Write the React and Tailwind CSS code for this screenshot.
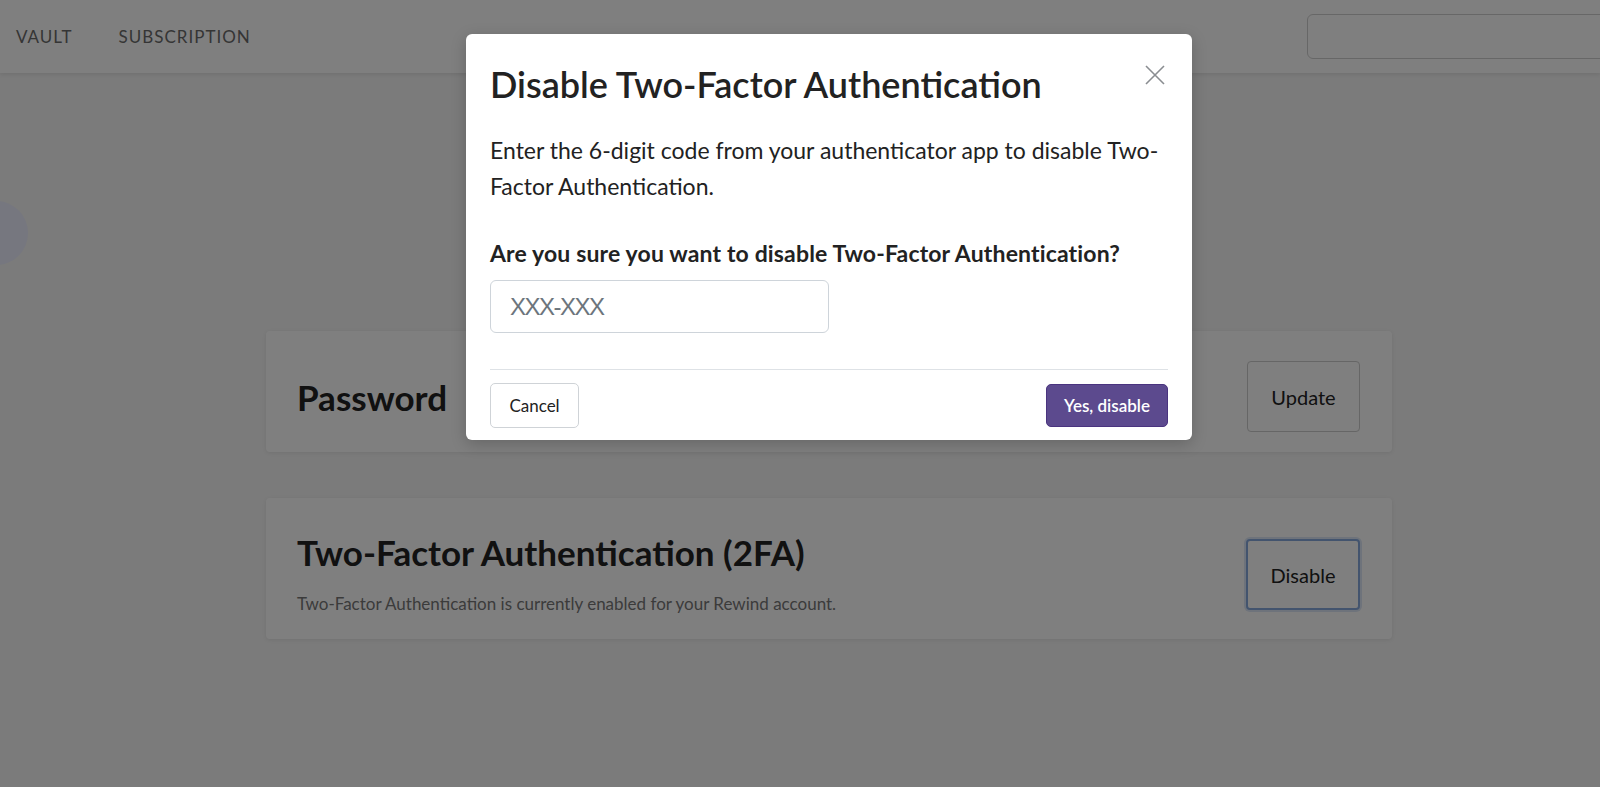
import React from "react";

function CloseIcon() {
  return (
    <svg width="20" height="20" viewBox="0 0 20 20" fill="none" stroke="#8a8d91" strokeWidth="1.6">
      <path d="M1 1 L19 19 M19 1 L1 19" />
    </svg>
  );
}

export default function App() {
  return (
    <div className="relative w-full h-[787px] overflow-hidden bg-[#f6f6f6]" style={{ fontFamily: "Lato, 'Noto Sans', sans-serif" }}>
      {/* Header */}
      <header className="h-[73px] bg-white shadow-[0_2px_4px_rgba(0,0,0,0.08)] flex items-center">
        <nav className="flex items-center gap-[46px] pl-[16px] text-[17px] tracking-[1px] text-[#6b6b6b]">
          <span>VAULT</span>
          <span>SUBSCRIPTION</span>
        </nav>
        <div className="ml-auto mr-[-30px] w-[323px] h-[45px] rounded-[6px] border border-[#cfcfcf] bg-white" />
      </header>

      {/* Avatar partial circle */}
      <div className="absolute left-[-36px] top-[201px] w-[64px] h-[64px] rounded-full bg-[#eceeff]" />

      {/* Content */}
      <main className="ml-[266px] w-[1126px] pt-[258px] flex flex-col gap-[46px]">
        <section className="h-[121px] bg-white rounded-[4px] shadow-[0_1px_4px_rgba(0,0,0,0.08)] flex items-center justify-between pl-[31px] pr-[32px] pt-[10px]">
          <h2 className="text-[35px] font-bold text-[#222] leading-[42px]">Password</h2>
          <button className="w-[113px] h-[71px] rounded-[4px] border border-[#cccccc] bg-white text-[20px] text-[#222]">Update</button>
        </section>
        <section className="h-[141px] bg-white rounded-[4px] shadow-[0_1px_4px_rgba(0,0,0,0.08)] flex items-center justify-between pl-[31px] pr-[32px]">
          <div className="flex flex-col pt-[10px]">
            <h2 className="text-[35px] font-bold text-[#222] leading-[42px]">Two-Factor Authentication (2FA)</h2>
            <p className="mt-[19px] text-[17px] leading-[24px] text-[#777]">Two-Factor Authentication is currently enabled for your Rewind account.</p>
          </div>
          <button className="mt-[12px] w-[114px] h-[71px] rounded-[4px] border-2 border-[#86a9dd] shadow-[0_0_0_2px_rgba(120,160,220,0.25)] bg-white text-[20px] text-[#222]">Disable</button>
        </section>
      </main>

      {/* Overlay */}
      <div className="absolute inset-0 bg-black/50" />

      {/* Modal */}
      <div className="absolute left-[466px] top-[34px] w-[726px] bg-white rounded-[6px] shadow-[0_4px_16px_rgba(0,0,0,0.2)] px-[24px] pb-[12px]">
        <div className="flex items-start justify-between pt-[28px]">
          <h1 className="text-[36px] font-semibold leading-[44px] text-[#222]">Disable Two-Factor Authentication</h1>
          <button className="mt-[3px] mr-[3px]"><CloseIcon /></button>
        </div>
        <p className="mt-[26px] text-[23px] leading-[36px] text-[#222]">
          Enter the 6-digit code from your authenticator app to disable Two-Factor Authentication.
        </p>
        <p className="mt-[31px] text-[23px] font-bold leading-[36px] text-[#222] tracking-[0.15px]">Are you sure you want to disable Two-Factor Authentication?</p>
        <input
          className="mt-[9px] w-[339px] h-[53px] rounded-[6px] border border-[#ced4da] px-[19px] text-[24px] tracking-[-1.5px] outline-none placeholder:text-[#6c757d]"
          style={{ fontFamily: "'Liberation Sans', Arial, sans-serif" }}
          placeholder="XXX-XXX"
        />
        <div className="mt-[36px] border-t border-[#dee2e6]" />
        <div className="mt-[13px] flex items-center justify-between">
          <button className="w-[89px] h-[45px] rounded-[5px] border border-[#cfd3d7] bg-white text-[17px] text-[#222]">Cancel</button>
          <button className="w-[122px] h-[43px] rounded-[5px] border border-[#4a347f] bg-[#5c4a8e] text-[17px] font-semibold text-white">Yes, disable</button>
        </div>
      </div>
    </div>
  );
}
